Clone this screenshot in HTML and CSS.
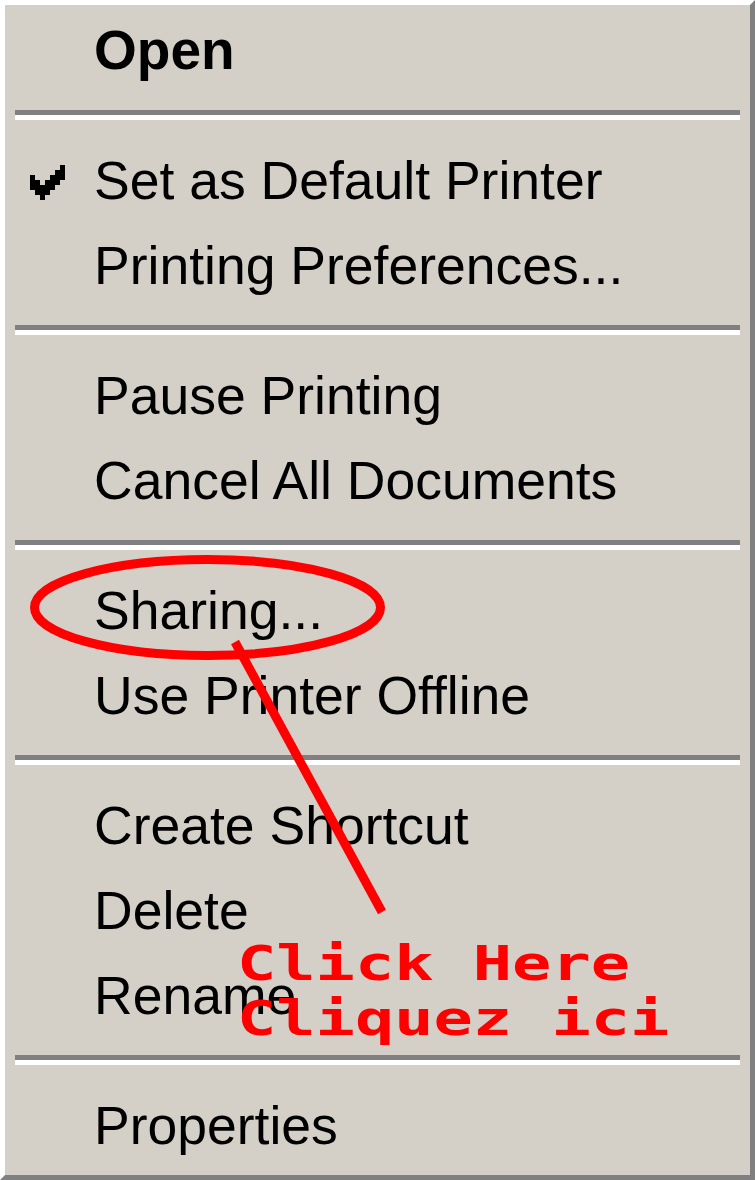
FILE: index.html
```html
<!DOCTYPE html>
<html>
<head>
<meta charset="utf-8">
<link rel="stylesheet" href="styles.css">
</head>
<body>
<div class="menu">
  <div class="item"><span class="icon"></span><span class="label bold">Open</span></div>
  <div class="sep"><div class="line"></div></div>
  <div class="item">
    <span class="icon">
      <svg class="check" width="35" height="35" viewBox="0 0 7 7" shape-rendering="crispEdges"><path d="M6 0h1v1h-1z M5 1h2v1h-2z M0 2h1v1h-1z M4 2h3v1h-3z M0 3h2v1h-2z M3 3h3v1h-3z M0 4h5v1h-5z M1 5h3v1h-3z M2 6h1v1h-1z" fill="#000"/></svg>
    </span>
    <span class="label">Set as Default Printer</span>
  </div>
  <div class="item"><span class="icon"></span><span class="label">Printing Preferences...</span></div>
  <div class="sep"><div class="line"></div></div>
  <div class="item"><span class="icon"></span><span class="label">Pause Printing</span></div>
  <div class="item"><span class="icon"></span><span class="label">Cancel All Documents</span></div>
  <div class="sep"><div class="line"></div></div>
  <div class="item"><span class="icon"></span><span class="label">Sharing...</span></div>
  <div class="item"><span class="icon"></span><span class="label">Use Printer Offline</span></div>
  <div class="sep"><div class="line"></div></div>
  <div class="item"><span class="icon"></span><span class="label">Create Shortcut</span></div>
  <div class="item"><span class="icon"></span><span class="label">Delete</span></div>
  <div class="item"><span class="icon"></span><span class="label">Rename</span></div>
  <div class="sep"><div class="line"></div></div>
  <div class="item"><span class="icon"></span><span class="label">Properties</span></div>

  <svg class="annot" width="755" height="1180" viewBox="0 0 755 1180">
    <ellipse cx="207.5" cy="607.5" rx="173" ry="48" fill="none" stroke="#ff0000" stroke-width="9"/>
    <line x1="235" y1="642" x2="382" y2="912" stroke="#ff0000" stroke-width="9"/>
  </svg>
  <div class="note">
    <div class="note-inner">Click Here<br>Cliquez ici</div>
  </div>
</div>
</body>
</html>
```
FILE: styles.css
```css
html, body {
  margin: 0;
  padding: 0;
  background: #d4d0c8;
}

.menu {
  position: relative;
  width: 755px;
  height: 1180px;
  box-sizing: border-box;
  background: #d4d0c8;
  border-left: 5px solid #ffffff;
  border-top: 5px solid #ffffff;
  border-right: 5px solid #808080;
  border-bottom: 5px solid #808080;
  padding-bottom: 10px;
  display: flex;
  flex-direction: column;
  overflow: hidden;
  font-family: "Liberation Sans", Arial, sans-serif;
  color: #000;
}

.item {
  display: flex;
  height: 85px;
  flex: none;
}

.icon {
  width: 89px;
  flex: none;
  box-sizing: border-box;
  padding: 30px 0 0 25px;
}

.check {
  display: block;
}

.label {
  display: block;
  font-size: 53.5px;
  line-height: 79px;
  padding-top: 6px;
  white-space: nowrap;
}

.bold {
  font-weight: bold;
  font-size: 55px;
}

.sep {
  height: 45px;
  flex: none;
  box-sizing: border-box;
  padding: 20px 10px 0 10px;
}

.line {
  height: 0;
  border-top: 5px solid #808080;
  border-bottom: 5px solid #ffffff;
}

.annot {
  position: absolute;
  left: -5px;
  top: -5px;
}

.note {
  position: absolute;
  left: 232px;
  top: 931px;
}

.note-inner {
  font-family: "DejaVu Sans Mono", "Liberation Mono", monospace;
  font-weight: bold;
  font-size: 48px;
  line-height: 55px;
  color: #ff0000;
  white-space: nowrap;
  transform: scaleX(1.36);
  transform-origin: 0 0;
}
```
